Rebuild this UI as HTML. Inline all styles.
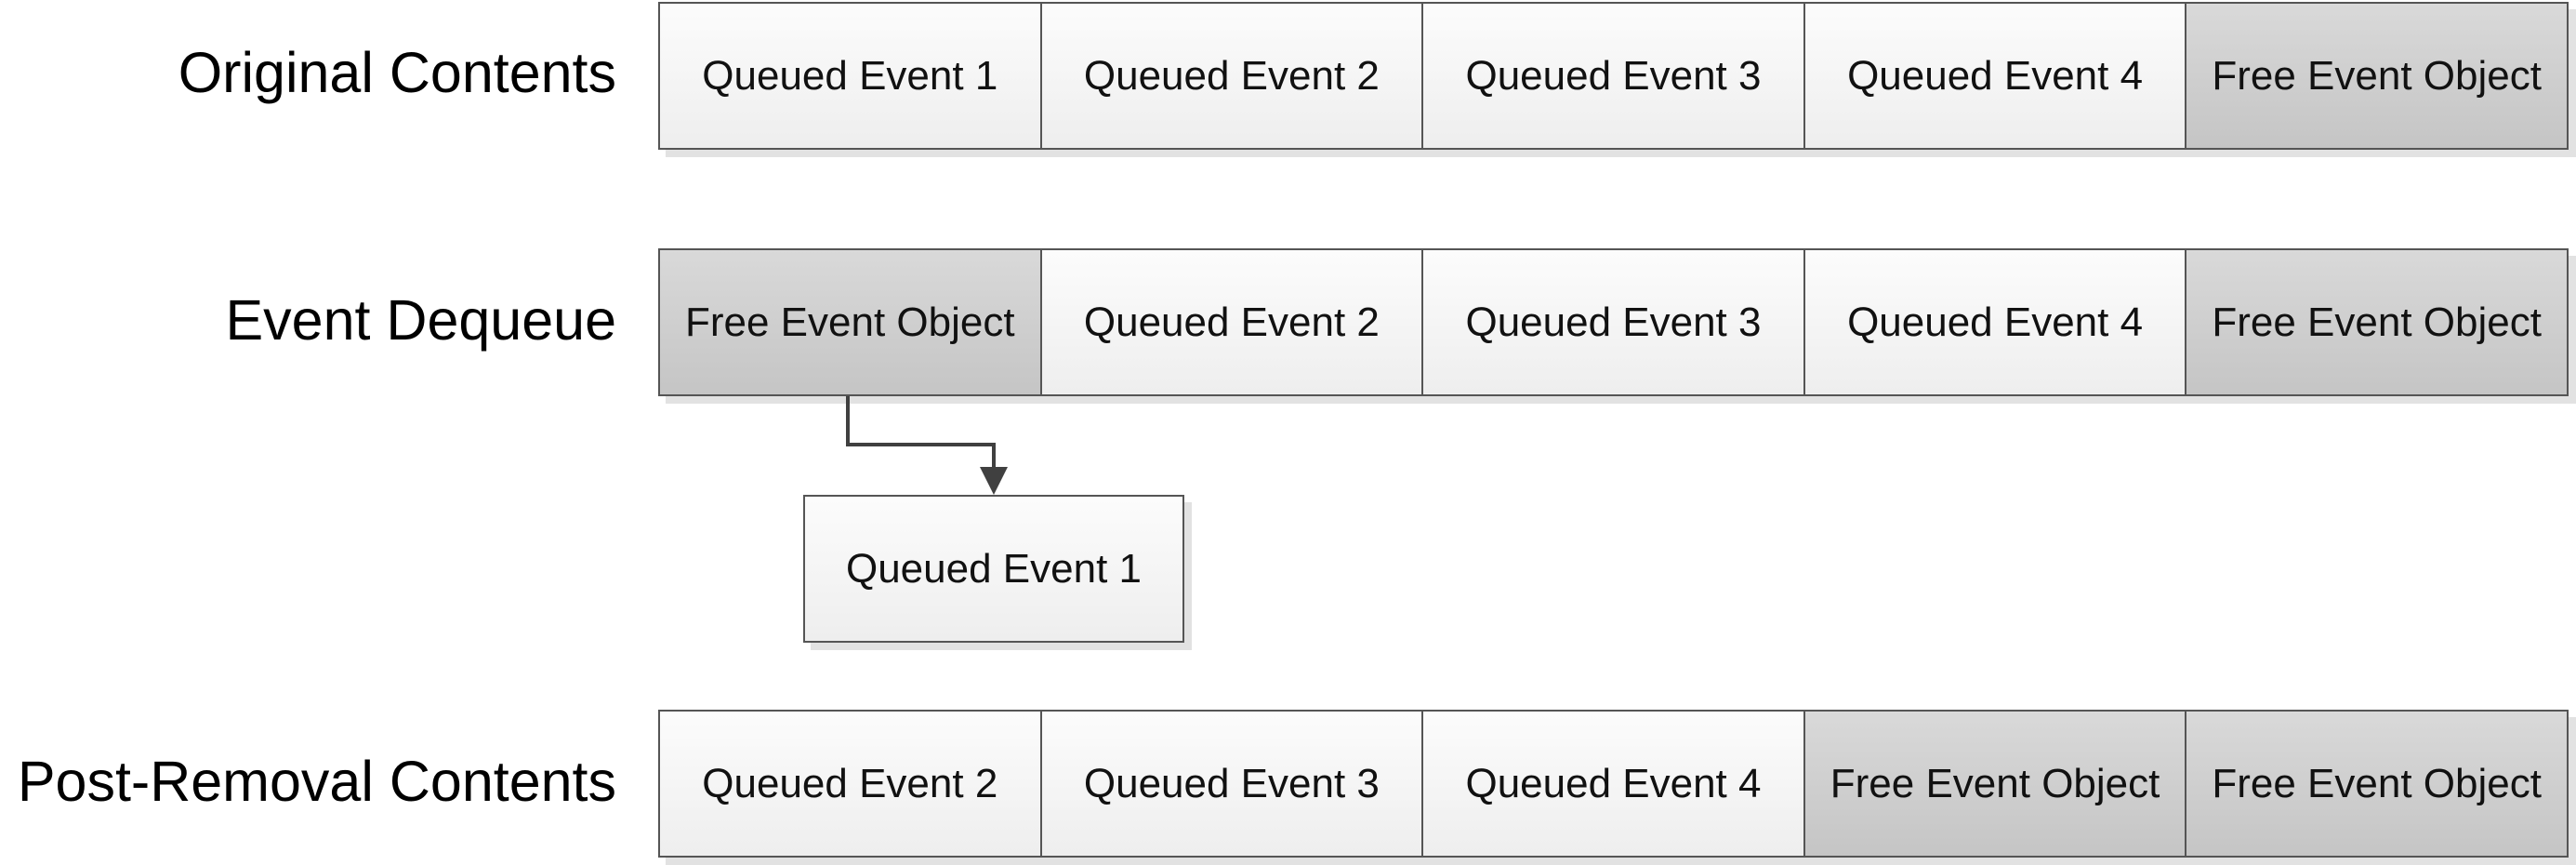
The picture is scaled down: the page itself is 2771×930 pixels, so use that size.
<!DOCTYPE html>
<html><head><style>
body{margin:0;width:2771px;height:930px;background:#fff;position:relative;overflow:hidden;font-family:"Liberation Sans",Arial,sans-serif;}
.lbl{position:absolute;right:2108px;font-size:61px;color:#000;line-height:1;white-space:nowrap}
.row{position:absolute;left:708px;width:2055px;height:159px;box-sizing:border-box;display:flex;border:2px solid #555;box-shadow:8px 8px 0 #e2e2e2}
.c{flex:1;display:flex;align-items:center;justify-content:center;font-size:44px;color:#111;border-right:2px solid #555;background:linear-gradient(#fcfcfc,#eeeeee);white-space:nowrap}
.c:last-child{border-right:none}
.g{background:linear-gradient(#d9d9d9,#c5c5c5)}
.box{position:absolute;left:864px;top:532px;width:410px;height:159px;box-sizing:border-box;border:2px solid #555;box-shadow:8px 8px 0 #e2e2e2;display:flex;align-items:center;justify-content:center;font-size:44px;color:#111;background:linear-gradient(#fcfcfc,#eeeeee)}
</style></head><body>
<div class="lbl" style="top:48px">Original Contents</div>
<div class="lbl" style="top:314px">Event Dequeue</div>
<div class="lbl" style="top:810px">Post-Removal Contents</div>
<div class="row" style="top:2px"><div class="c">Queued Event 1</div><div class="c">Queued Event 2</div><div class="c">Queued Event 3</div><div class="c">Queued Event 4</div><div class="c g">Free Event Object</div></div>
<div class="row" style="top:267px"><div class="c g">Free Event Object</div><div class="c">Queued Event 2</div><div class="c">Queued Event 3</div><div class="c">Queued Event 4</div><div class="c g">Free Event Object</div></div>
<div class="row" style="top:763px"><div class="c">Queued Event 2</div><div class="c">Queued Event 3</div><div class="c">Queued Event 4</div><div class="c g">Free Event Object</div><div class="c g">Free Event Object</div></div>
<svg style="position:absolute;left:0;top:0" width="2771" height="930">
<polyline points="912,426 912,478 1069,478 1069,510" fill="none" stroke="#404040" stroke-width="4"/>
<polygon points="1054,502 1084,502 1069,532" fill="#404040"/>
</svg>
<div class="box">Queued Event 1</div>
</body></html>
